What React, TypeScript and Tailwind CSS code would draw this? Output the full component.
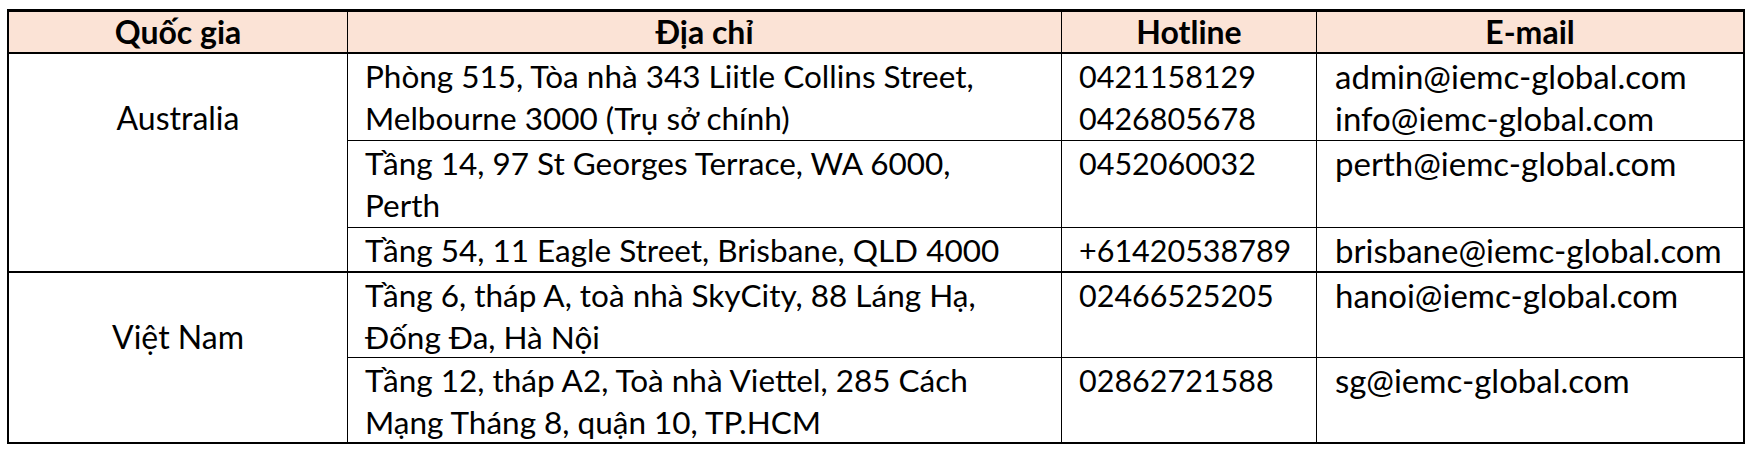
import React from "react";

type Office = {
  address: string[];
  hotline: string[];
  email: string[];
  line: string;
};

const groups: { country: string; rows: string; offices: Office[] }[] = [
  {
    country: "Australia",
    rows: "row-span-3 border-b-2",
    offices: [
      {
        address: ["Phòng 515, Tòa nhà 343 Liitle Collins Street,", "Melbourne 3000 (Trụ sở chính)"],
        hotline: ["0421158129", "0426805678"],
        email: ["admin@iemc-global.com", "info@iemc-global.com"],
        line: "border-b",
      },
      {
        address: ["Tầng 14, 97 St Georges Terrace, WA 6000,", "Perth"],
        hotline: ["0452060032"],
        email: ["perth@iemc-global.com"],
        line: "border-b",
      },
      {
        address: ["Tầng 54, 11 Eagle Street, Brisbane, QLD 4000"],
        hotline: ["+61420538789"],
        email: ["brisbane@iemc-global.com"],
        line: "border-b-2",
      },
    ],
  },
  {
    country: "Việt Nam",
    rows: "row-span-2",
    offices: [
      {
        address: ["Tầng 6, tháp A, toà nhà SkyCity, 88 Láng Hạ,", "Đống Đa, Hà Nội"],
        hotline: ["02466525205"],
        email: ["hanoi@iemc-global.com"],
        line: "border-b",
      },
      {
        address: ["Tầng 12, tháp A2, Toà nhà Viettel, 285 Cách", "Mạng Tháng 8, quận 10, TP.HCM"],
        hotline: ["02862721588"],
        email: ["sg@iemc-global.com"],
        line: "",
      },
    ],
  },
];

function Lines({ items }: { items: string[] }) {
  return (
    <>
      {items.map((t, i) => (
        <div key={i} className="whitespace-nowrap">
          {t}
        </div>
      ))}
    </>
  );
}

export default function App() {
  return (
    <div
      className="w-[1754px] h-[452px] bg-white pl-[7px] pt-[9px] text-black"
      style={{ fontFamily: "Lato, 'Liberation Sans', sans-serif" }}
    >
      <div className="w-[1738px] grid grid-cols-[339px_714px_255px_426px] grid-rows-[42px_87px_87px_45px_85px_84px] border-t-[3px] border-x-2 border-b-2 border-black text-[32px] leading-[42px]">
        {["Quốc gia", "Địa chỉ", "Hotline", "E-mail"].map((h, i) => (
          <div
            key={h}
            className={`bg-[#fbe3d6] font-bold flex items-center justify-center border-b-2 border-black ${i < 3 ? "border-r" : ""}`}
          >
            {h}
          </div>
        ))}
        {groups.map((g) => (
          <React.Fragment key={g.country}>
            <div
              className={`${g.rows} col-start-1 border-r border-black text-center pt-[43px]`}
            >
              {g.country}
            </div>
            {g.offices.map((o, i) => (
              <React.Fragment key={i}>
                <div className={`col-start-2 ${o.line} border-r border-black pl-[17px] pt-[1px] text-[31.5px]`}>
                  <Lines items={o.address} />
                </div>
                <div className={`${o.line} border-r border-black pl-[17px] pt-[1px] text-[30.5px]`}>
                  <Lines items={o.hotline} />
                </div>
                <div className={`${o.line} border-black pl-[18px] pt-[1px] text-[33px]`}>
                  <Lines items={o.email} />
                </div>
              </React.Fragment>
            ))}
          </React.Fragment>
        ))}
      </div>
    </div>
  );
}
